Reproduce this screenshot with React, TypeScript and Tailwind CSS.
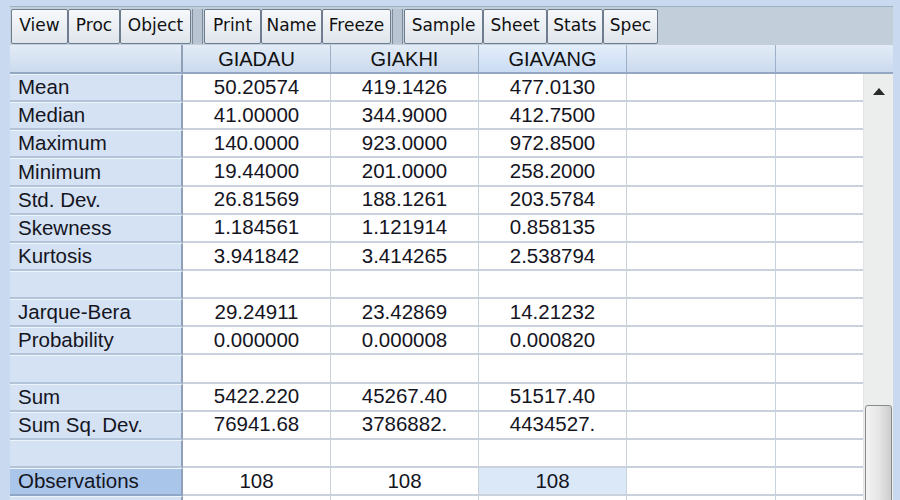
import React from "react";

const rows: { label: string; v: string[]; hl?: boolean }[] = [
  { label: "Mean", v: ["50.20574", "419.1426", "477.0130"] },
  { label: "Median", v: ["41.00000", "344.9000", "412.7500"] },
  { label: "Maximum", v: ["140.0000", "923.0000", "972.8500"] },
  { label: "Minimum", v: ["19.44000", "201.0000", "258.2000"] },
  { label: "Std. Dev.", v: ["26.81569", "188.1261", "203.5784"] },
  { label: "Skewness", v: ["1.184561", "1.121914", "0.858135"] },
  { label: "Kurtosis", v: ["3.941842", "3.414265", "2.538794"] },
  { label: "", v: ["", "", ""] },
  { label: "Jarque-Bera", v: ["29.24911", "23.42869", "14.21232"] },
  { label: "Probability", v: ["0.000000", "0.000008", "0.000820"] },
  { label: "", v: ["", "", ""] },
  { label: "Sum", v: ["5422.220", "45267.40", "51517.40"] },
  { label: "Sum Sq. Dev.", v: ["76941.68", "3786882.", "4434527."] },
  { label: "", v: ["", "", ""] },
  { label: "Observations", v: ["108", "108", "108"], hl: true },
  { label: "", v: ["", "", ""] },
];

const groups: { label: string; w: string }[][] = [
  [
    { label: "View", w: "w-[57px]" },
    { label: "Proc", w: "w-[52px]" },
    { label: "Object", w: "w-[71px]" },
  ],
  [
    { label: "Print", w: "w-[57px]" },
    { label: "Name", w: "w-[61px]" },
    { label: "Freeze", w: "w-[69px]" },
  ],
  [
    { label: "Sample", w: "w-[79px]" },
    { label: "Sheet", w: "w-[64px]" },
    { label: "Stats", w: "w-[56px]" },
    { label: "Spec", w: "w-[55px]" },
  ],
];

const font = { fontFamily: '"Liberation Sans", Arial, sans-serif' };
const btnFont = { fontFamily: '"DejaVu Sans", Tahoma, sans-serif' };

export default function App() {
  return (
    <div className="w-[900px] h-[500px] overflow-hidden bg-[#c8d9f0] pl-[10px] pt-[6px]" style={font}>
      {/* toolbar */}
      <div className="w-[883px] h-[39px] bg-[#c3cedb] border-t border-[#9fb0c5] flex items-center pl-[1px]">
        {groups.map((g, gi) => (
          <React.Fragment key={gi}>
            {gi > 0 && (
              <div className="w-[11px] h-[35px] mx-[1px] border-x border-[#7d8a9a] bg-[#b9c4d2]" />
            )}
            {g.map((b) => (
              <div
                key={b.label}
                className={`${b.w} h-[35px] flex items-center justify-center border border-[#6e7c8e] rounded-[2px] bg-gradient-to-b from-[#f7f9fb] to-[#dfe5ec] text-[17px] text-[#111]`}
                style={btnFont}
              >
                {b.label}
              </div>
            ))}
          </React.Fragment>
        ))}
      </div>
      {/* header */}
      <div className="flex w-[883px] h-[29px] border-b-2 border-[#93a7c2] bg-gradient-to-b from-[#e3ecf7] to-[#cbdaee] text-[20px] text-[#111]">
        <div className="w-[173px] border-r-2 border-[#8fa0b8]" />
        <div className="w-[148px] border-r border-[#9eb0c8] flex items-center justify-center">GIADAU</div>
        <div className="w-[148px] border-r border-[#9eb0c8] flex items-center justify-center">GIAKHI</div>
        <div className="w-[148px] border-r border-[#9eb0c8] flex items-center justify-center bg-gradient-to-b from-[#e4eefb] to-[#cadcf3]">GIAVANG</div>
        <div className="w-[149px] border-r border-[#9eb0c8]" />
        <div className="w-[117px]" />
      </div>
      {/* grid body */}
      <div className="flex w-[883px]">
        <div className="w-[853px]">
          {rows.map((r, i) => (
            <div key={i} className="flex h-[28.15px] text-[20.5px] text-[#15151f]">
              <div
                className={`w-[173px] pl-[8px] flex items-center border-r-2 border-[#8fa0b8] border-b-2 ${
                  r.hl ? "bg-[#a9c5ea] border-b-[#8fa6c6]" : "bg-[#d4e2f3] border-b-[#b4c4d8]"
                } border-t border-t-[#eef4fb]`}
              >
                {r.label}
              </div>
              {r.v.map((v, j) => (
                <div
                  key={j}
                  className={`w-[148px] border-r border-b-2 border-[#c9d1dc] flex items-center justify-center ${
                    r.hl && j === 2 ? "bg-[#dbe8f8]" : "bg-white"
                  }`}
                >
                  {v}
                </div>
              ))}
              <div className="w-[149px] border-r border-b-2 border-[#c9d1dc] bg-white" />
              <div className="w-[87px] border-b-2 border-[#c9d1dc] bg-white" />
            </div>
          ))}
        </div>
        {/* scrollbar */}
        <div className="w-[30px] h-[460px] bg-[#eceeee] relative border-l border-[#e2e4e6]">
          <svg className="absolute left-[9px] top-[14px]" width="12" height="7" viewBox="0 0 12 7">
            <path d="M6 0 L12 7 L0 7 Z" fill="#2a2a2a" />
          </svg>
          <div className="absolute left-[1px] top-[331px] w-[27px] h-[110px] border border-[#8a8a8a] rounded-[3px] bg-gradient-to-r from-[#f4f4f4] via-[#e6e6e6] to-[#cdcdcd]" />
        </div>
      </div>
    </div>
  );
}
